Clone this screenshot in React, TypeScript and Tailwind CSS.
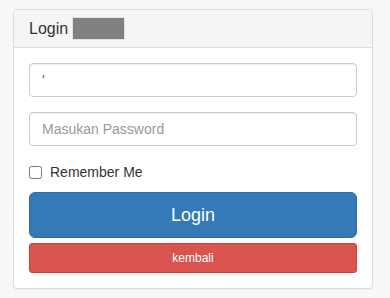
import React from "react";

export default function App() {
  return (
    <div className="w-[390px] h-[298px] bg-[#f8f8f8] pt-[9px] pl-[13px] overflow-hidden" style={{ fontFamily: '"Liberation Sans", Arial, sans-serif' }}>
      <div className="w-[360px] bg-white border border-[#dddddd] rounded-[4px] shadow-[0_1px_1px_rgba(0,0,0,0.05)] text-[#333333]">
        <div className="h-[38px] bg-[#f5f5f5] border-b border-[#dddddd] rounded-t-[3px] px-[15px] flex items-center text-[16px]">
          <span>Login</span>
          <span className="ml-[4px] w-[53px] h-[23px] bg-[#808080] border border-[#e0e0e0]"></span>
        </div>
        <div className="p-[15px] flex flex-col">
          <input
            className="h-[34px] w-full border border-[#cccccc] rounded-[4px] px-[12px] text-[14px] text-[#555555] outline-none shadow-[inset_0_1px_1px_rgba(0,0,0,0.075)]"
            defaultValue="'"
          />
          <input
            type="password"
            className="mt-[15px] h-[34px] w-full border border-[#cccccc] rounded-[4px] px-[12px] text-[14px] text-[#555555] placeholder:text-[#999999] outline-none shadow-[inset_0_1px_1px_rgba(0,0,0,0.075)]"
            placeholder="Masukan Password"
          />
          <label className="mt-[20px] flex items-center h-[13px] text-[14px] text-[#333333]">
            <input type="checkbox" className="w-[13px] h-[13px] m-0" />
            <span className="ml-[8px]">Remember Me</span>
          </label>
          <button className="mt-[13px] h-[46px] w-full bg-[#337ab7] border border-[#2e6da4] rounded-[6px] text-white text-[18px]">
            Login
          </button>
          <button className="mt-[5px] h-[30px] w-full bg-[#d9534f] border border-[#d43f3a] rounded-[3px] text-white text-[12px]">
            kembali
          </button>
        </div>
      </div>
    </div>
  );
}
